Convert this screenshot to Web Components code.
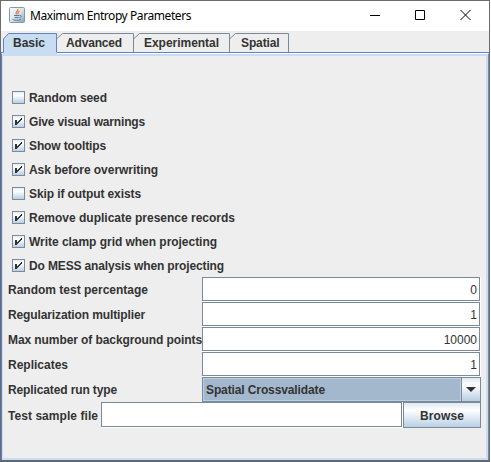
<!DOCTYPE html>
<html lang="en"><head><meta charset="utf-8"><title>Maximum Entropy Parameters</title>
<style>html,body{margin:0;background:#fff;overflow:hidden}body{width:491px;height:462px;font:bold 12px "Liberation Sans",Arial,sans-serif;color:#333}</style></head><body>
<java-window>
<title-bar slot="title"></title-bar>
<tab-strip slot="tabs"></tab-strip>
<check-row label="Random seed" w="78"></check-row>
<check-row label="Give visual warnings" w="116" checked></check-row>
<check-row label="Show tooltips" w="77" checked></check-row>
<check-row label="Ask before overwriting" w="129" checked></check-row>
<check-row label="Skip if output exists" w="112"></check-row>
<check-row label="Remove duplicate presence records" w="206" checked></check-row>
<check-row label="Write clamp grid when projecting" w="188" checked></check-row>
<check-row label="Do MESS analysis when projecting" w="195" checked></check-row>
<field-row label="Random test percentage" w="140" value="0"></field-row>
<field-row label="Regularization multiplier" w="137" value="1"></field-row>
<field-row label="Max number of background points" w="194" value="10000"></field-row>
<field-row label="Replicates" w="60" value="1"></field-row>
<combo-row></combo-row>
<file-row></file-row>
</java-window>
<script>
function define(name, html, setup){
  customElements.define(name, class extends HTMLElement{
    connectedCallback(){
      if(this.shadowRoot) return;
      this.attachShadow({mode:'open'}).innerHTML = '<style>*,:host{box-sizing:border-box}</style>' + html(this);
      if(setup) setup(this);
    }
  });
}
/* Text label whose tracking is adjusted to occupy a set width. */
define('fit-text', () => '<style>:host{display:inline-block;white-space:pre;line-height:14px;height:14px}span{display:inline-block}</style><span></span>', el => {
  const s = el.shadowRoot.querySelector('span');
  s.textContent = el.getAttribute('text');
  const w = +el.getAttribute('w');
  if(w){
    const n = s.getBoundingClientRect().width;
    s.style.letterSpacing = ((w - n) / s.textContent.length) + 'px';
    el.style.width = w + 'px';
  }
});
define('java-window', () => `<style>
:host{display:flex;flex-direction:column;width:490px;height:462px;border:1px solid #6c6c6c;border-bottom:2px solid #5d6874;background:#eee}
.frame{flex:1;display:flex;border-left:1px solid #6382bf;border-right:1px solid #7a8a99;border-top:1px solid #fff}
.pane{flex:1;border:2px solid #c8ddf2;border-left-width:1px;padding:29px 5px 0 5px;display:flex;flex-direction:column}
</style><slot name="title"></slot><slot name="tabs"></slot><div class="frame"><div class="pane"><slot></slot></div></div>`);
define('title-bar', () => `<style>
:host{display:flex;height:30px;background:#fff;align-items:center;padding-left:8px;color:#000;font:12px "Noto Sans","Open Sans",sans-serif}
fit-text{margin-left:5px;height:16px;line-height:16px}.b{display:flex;margin:0 0 2px auto;padding-right:18px;gap:35px}svg{display:block}.j{margin-bottom:2px}
</style><svg class="j" width="16" height="16" viewBox="0 0 16 16"><defs><linearGradient id="g" x2="1" y2="1"><stop stop-color="#fafcfd"/><stop offset=".5" stop-color="#dbe5ec"/><stop offset="1" stop-color="#84a0b5"/></linearGradient></defs><rect x=".5" y=".5" width="15" height="15" rx="1" fill="url(#g)" stroke="#8499a8"/><path d="M8.800 2c1.200 2-3.300 2.800-1.300 5.500M10.500 4.200c-2.500 1-1.500 2-1.500 3.300" fill="none" stroke="#e87a32" stroke-width="1.200"/><path d="M5 8.500h5.500M10.800 8.500c2.500 0 1.500 2-.3 2M5.500 10.500h4M3.500 12.500c2 1 6 1 8.500 0" fill="none" stroke="#587c9c"/></svg>
<fit-text text="Maximum Entropy Parameters" w="161"></fit-text>
<div class="b"><svg width="10" height="10"><path d="M0 5.500H10" stroke="#000"/></svg><svg width="10" height="10"><path d="M.5.5h9v9h-9z" fill="none" stroke="#000"/></svg><svg width="11" height="10"><path d="M.5 0l10 10M10.500 0L.5 10" fill="none" stroke="#000"/></svg></div>`);
define('tab-strip', () => `<style>
:host{display:grid;grid-template-columns:54px 77px 96px 59px;height:22px;padding:2px 0 0 2px;position:relative;background:linear-gradient(#6382bf,#6382bf) 0 21px/100% 1px no-repeat}
div{position:relative;display:flex}svg{position:absolute;left:0;top:0;overflow:visible}fit-text{position:relative;margin:3px 0 0 10px}
</style>` + [['Basic',54,32,10,1],['Advanced',77,56,9],['Experimental',96,75,10],['Spatial',59,38.5,11]].map(([t,w,tw,m,a]) =>
 `<div><svg width="${w}" height="20">${a?`<path d="M0 22V6L6 0H${w}V22z" fill="#c8ddf2"/>`:''}<path d="${a?'M.5 19.500V6':'M-.5 6'}L5.500 .5H${w-.5}V19.500" fill="none" stroke="${a?'#6382bf':'#7a8a99'}"/></svg><fit-text style="margin-left:${m}px" text="${t}" w="${tw}"></fit-text></div>`).join(''));
define('check-row', el => `<style>
:host{display:flex;height:24px;align-items:flex-start;padding:6px 0 0 4px;gap:4px}i{width:13px;height:13px;border:1px solid #7a8a99;background:linear-gradient(#e6eef6,#fff 30%,#b8cfe5)}svg{display:block}
</style><i>${el.hasAttribute('checked')?'<svg width="11" height="11" shape-rendering="crispEdges"><path d="M2 4h2v2h1V5h1V4h1V3h1V2h1v2H8v1H7v1H6v1H5v1H4v1H2z" fill="#333"/></svg>':''}</i><fit-text text="${el.getAttribute('label')}" w="${el.getAttribute('w')}"></fit-text>`);
define('text-box', el => `<style>
:host{display:flex;background:#fff;font-weight:400;border:1px solid #fff;border-width:0 1px 1px 0}
div{flex:1;border:1px solid #7a8a99;display:flex;justify-content:flex-end;align-items:center;padding:1px 2px 0 0}
</style><div>${el.hasAttribute('value')?`<fit-text text="${el.getAttribute('value')}"></fit-text>`:''}</div>`);
define('field-row', el => `<style>
:host{display:grid;grid-template-columns:194px 279px;height:25px;align-items:center}text-box{height:25px}
</style><fit-text text="${el.getAttribute('label')}" w="${el.getAttribute('w')}"></fit-text><text-box value="${el.getAttribute('value')}"></text-box>`);
define('combo-row', () => `<style>
:host{display:grid;grid-template-columns:194px 279px;height:25px;align-items:center}
.c{height:25px;border:1px solid #7a8a99;display:grid;grid-template-columns:1fr 19px}
.v{border:1px solid #b8cfe5;background:#a3b8cc;display:flex;align-items:center;padding-left:2px}
.a{border-left:1px solid #7a8a99;background:linear-gradient(#dfe9f3,#fff 30%,#b8cfe5);display:grid;place-items:center}
</style><fit-text text="Replicated run type" w="109"></fit-text><div class="c"><div class="v"><fit-text text="Spatial Crossvalidate" w="119"></fit-text></div><div class="a"><svg width="10" height="5"><path d="M0 0h10L5 5z" fill="#333"/></svg></div></div>`);
define('file-row', () => `<style>
:host{display:grid;grid-template-columns:93px 302px 78px;height:26px;align-items:center}text-box{height:26px}
:host>fit-text,fit-text{margin-top:2px}
button{height:26px;border:1px solid #7a8a99;border-radius:0;padding:0;font:inherit;color:inherit;background:linear-gradient(#dfe9f3,#fff 30%,#b8cfe5)}
</style><fit-text text="Test sample file" w="90"></fit-text><text-box></text-box><button><fit-text text="Browse" w="44"></fit-text></button>`);
</script></body></html>
